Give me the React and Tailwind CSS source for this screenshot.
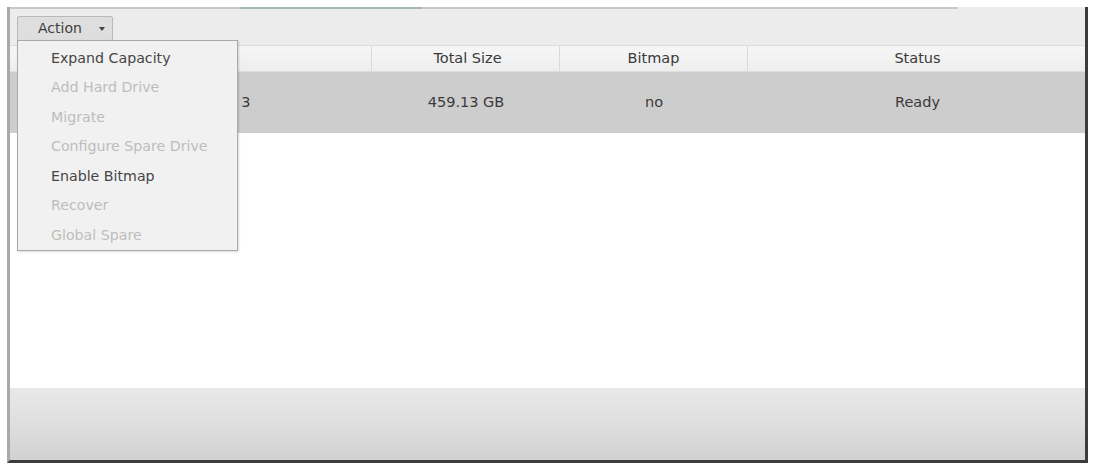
import React from "react";

const items = [
  { t: "Expand Capacity", on: true },
  { t: "Add Hard Drive", on: false },
  { t: "Migrate", on: false },
  { t: "Configure Spare Drive", on: false },
  { t: "Enable Bitmap", on: true },
  { t: "Recover", on: false },
  { t: "Global Spare", on: false },
];

export default function App() {
  return (
    <div
      className="relative w-[1095px] h-[467px] bg-white overflow-hidden text-[14px]"
      style={{ fontFamily: '"DejaVu Sans", Verdana, sans-serif' }}
    >
      <div className="pt-[7px] pl-[7px]">
        <div className="relative w-[1081px] h-[456px] flex flex-col border-l-[3px] border-l-[#a9a9a9] border-r-[3px] border-r-[#3c3c3c] border-b-[3px] border-b-[#3c3c3c]">
          {/* top line */}
          <div className="flex h-[2px] shrink-0">
            <div className="w-[230px] bg-[#c8c8c8]" />
            <div className="w-[182px] bg-[#9fb9b6]" />
            <div className="w-[536px] bg-[#c8c8c8]" />
            <div className="flex-1 bg-[#ececec]" />
          </div>
          {/* toolbar */}
          <div className="h-[36px] shrink-0 bg-[#ececec] flex items-center pl-[7px]">
            <div className="w-[96px] h-[25px] mt-[2px] rounded-[2px] border border-[#b9b9b9] bg-[#dedede] flex items-center text-[#3e3e3e] text-[14px]">
              <span className="ml-[20px]">Action</span>
              <svg className="ml-[17px] mt-[1px]" width="6" height="4" viewBox="0 0 6 4">
                <path d="M0 0 L6 0 L3 4 Z" fill="#444" />
              </svg>
            </div>
          </div>
          {/* header */}
          <div className="h-[27px] shrink-0 flex bg-gradient-to-b from-[#f6f6f6] to-[#eeeeee] border-y border-[#dedede] text-[#3a3a3a] text-[14.5px]">
            <div className="w-[362px] border-r border-[#d9d9d9]" />
            <div className="w-[188px] border-r border-[#d9d9d9] flex items-center justify-center pl-[4px]">Total Size</div>
            <div className="w-[188px] border-r border-[#d9d9d9] flex items-center justify-center">Bitmap</div>
            <div className="flex-1 flex items-center justify-center pl-[2px]">Status</div>
          </div>
          {/* selected row */}
          <div className="h-[61px] shrink-0 flex bg-[#cdcdcd] text-[#3a3a3a] text-[14.5px]">
            <div className="w-[362px] flex items-center justify-center pr-[17px]">Disk Volume: 1 2 3</div>
            <div className="w-[188px] flex items-center justify-center">459.13 GB</div>
            <div className="w-[188px] flex items-center justify-center">no</div>
            <div className="flex-1 flex items-center justify-center pl-[2px]">Ready</div>
          </div>
          {/* empty area */}
          <div className="flex-1 bg-white" />
          {/* footer */}
          <div className="h-[72px] shrink-0 border-t border-[#e6e6e6] bg-gradient-to-b from-[#e9e9e9] via-[#dedede] to-[#d1d1d1]" />

          {/* dropdown menu */}
          <div className="absolute left-[7px] top-[33px] w-[221px] h-[211px] bg-[#f1f1f1] border border-[#a9a9a9] shadow-[1px_1px_2px_rgba(0,0,0,0.15)] flex flex-col pt-[3px]">
            {items.map((it) => (
              <div
                key={it.t}
                className={
                  "h-[29.8px] flex items-center pl-[33px] text-[14.2px] " +
                  (it.on ? "text-[#454545]" : "text-[#bdbdbd]")
                }
              >
                {it.t}
              </div>
            ))}
          </div>
        </div>
      </div>
    </div>
  );
}
